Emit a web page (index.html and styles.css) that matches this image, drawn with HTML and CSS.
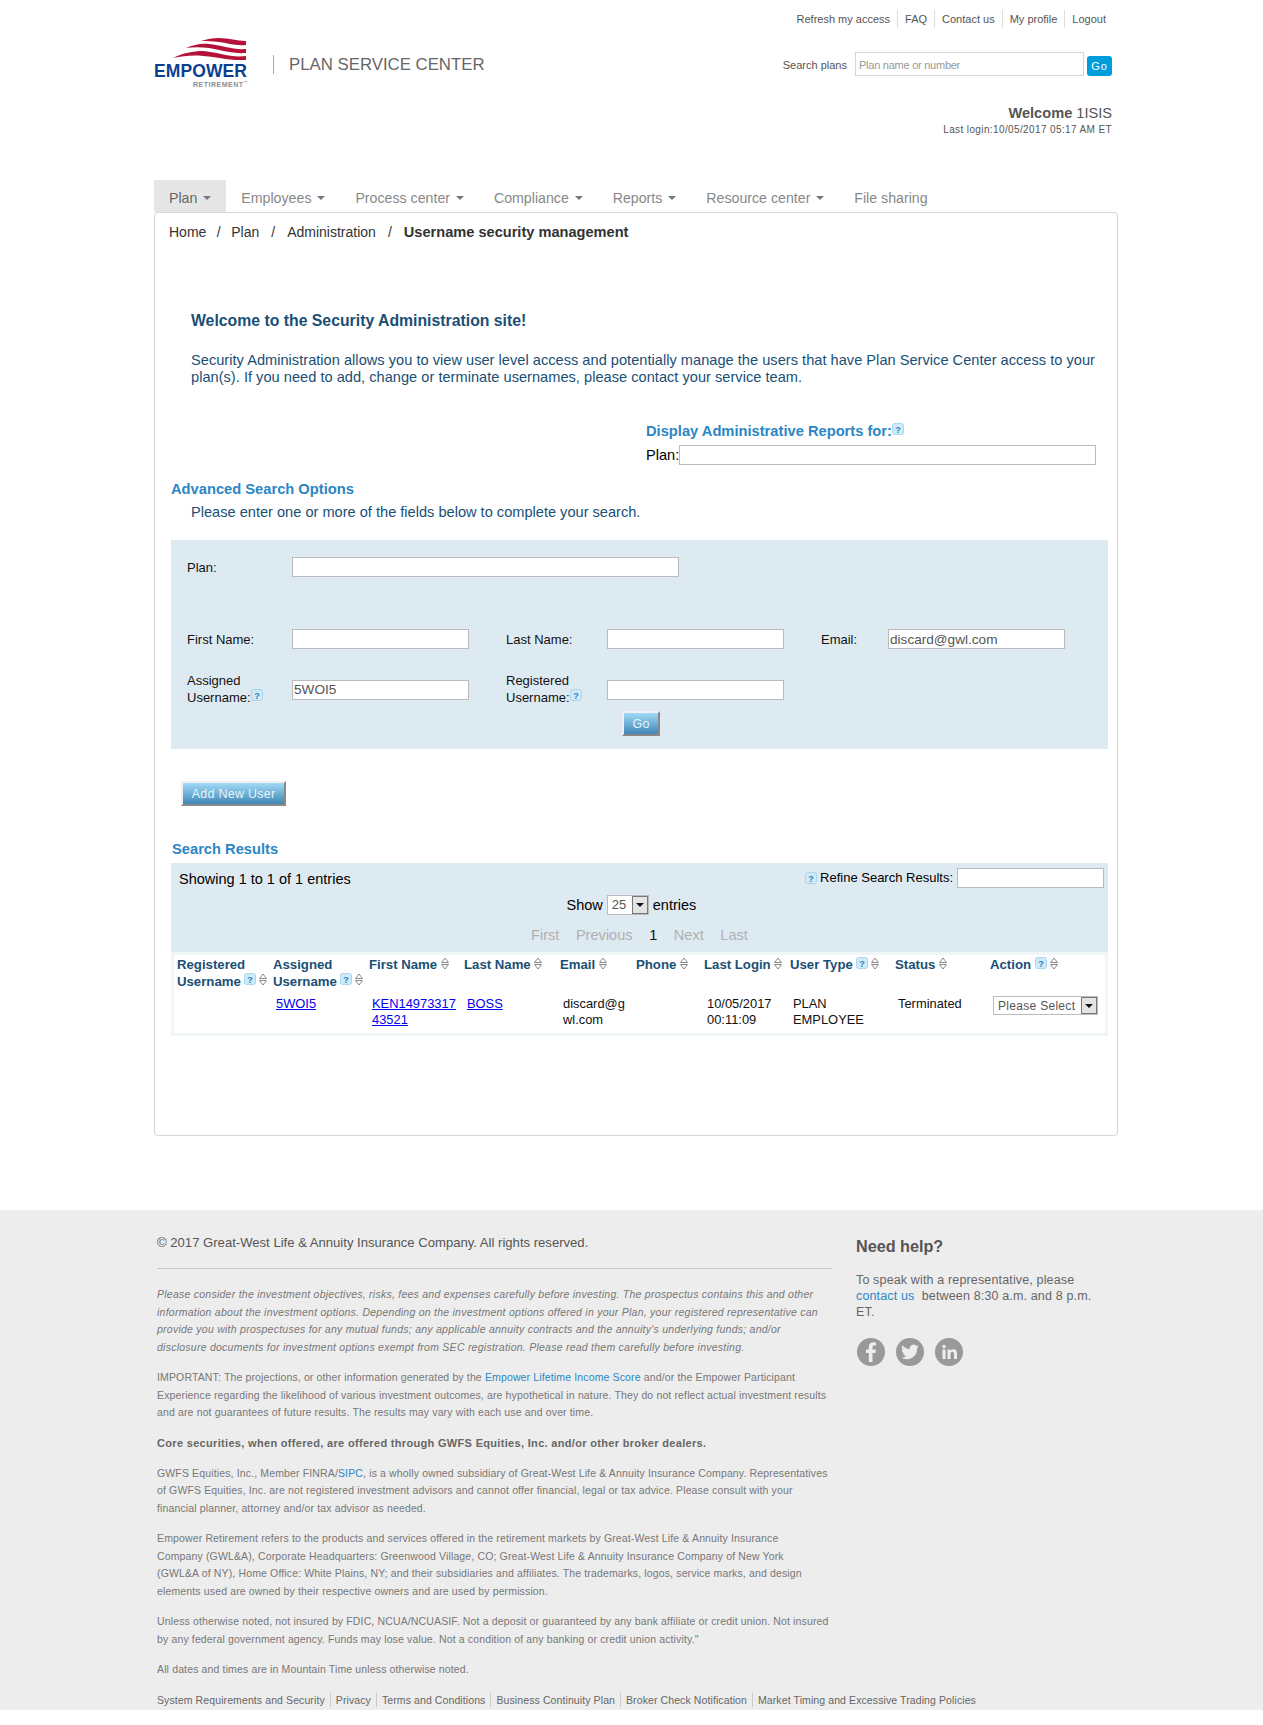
FILE: index.html
```html
<!DOCTYPE html>
<html lang="en">
<head>
<meta charset="utf-8">
<title>Plan Service Center</title>
<link rel="stylesheet" href="styles.css">
</head>
<body>
<div class="page">
  <header class="header">
    <div class="brand">
      <div class="logo">
        <svg class="flag" width="74" height="22" viewBox="0 0 74 22"><path fill="#b5123a" d="M28 3C34 1 40 0 46 0C56 0 64 3 73 3V7C62 8 54 5 46 4C40 3 34 3 28 3ZM13 10C20 7 28 5 36 6C48 7 60 12 73 11V15C60 16 48 12 36 10C28 9 20 9 13 10ZM0 20C10 15 20 13 30 13C44 14 58 20 73 18V22C58 23 44 19 30 18C20 17 10 18 0 20Z"/></svg>
        <div class="logo-word">EMPOWER</div>
        <div class="logo-sub">RETIREMENT<sup>™</sup></div>
      </div>
      <div class="site-title">PLAN SERVICE CENTER</div>
    </div>
    <div class="utility">
      <nav class="top-links">
        <a>Refresh my access</a><a>FAQ</a><a>Contact us</a><a>My profile</a><a>Logout</a>
      </nav>
      <div class="plan-search">
        <span class="plan-search-label">Search plans</span>
        <input class="plan-search-input" placeholder="Plan name or number">
        <button class="go-small">Go</button>
      </div>
      <div class="welcome"><b>Welcome</b> 1ISIS</div>
      <div class="last-login">Last login:10/05/2017 05:17 AM ET</div>
    </div>
  </header>

  <nav class="tabs">
    <a class="tab active">Plan<i class="caret"></i></a>
    <a class="tab">Employees<i class="caret"></i></a>
    <a class="tab">Process center<i class="caret"></i></a>
    <a class="tab">Compliance<i class="caret"></i></a>
    <a class="tab">Reports<i class="caret"></i></a>
    <a class="tab">Resource center<i class="caret"></i></a>
    <a class="tab">File sharing</a>
  </nav>

  <main class="panel">
    <div class="crumbs">
      <a>Home</a><span class="sep">/</span><a>Plan</a><span class="sep">/</span><a>Administration</a><span class="sep">/</span><b>Username security management</b>
    </div>
    <section class="intro">
      <h1>Welcome to the Security Administration site!</h1>
      <p>Security Administration allows you to view user level access and potentially manage the users that have Plan Service Center access to your plan(s). If you need to add, change or terminate usernames, please contact your service team.</p>
    </section>
    <section class="reports">
      <h2>Display Administrative Reports for:<i class="help"><svg viewBox="0 0 12 12"><rect x=".5" y=".5" width="11" height="11" rx="2" fill="#cfe9f6" stroke="#a9d6ec"/><text x="6" y="9.500" text-anchor="middle">?</text></svg></i></h2>
      <label class="reports-plan">Plan:<input class="reports-input"></label>
    </section>
    <h2 class="adv-title">Advanced Search Options</h2>
    <p class="adv-note">Please enter one or more of the fields below to complete your search.</p>
    <form class="search-box">
      <div class="row row-plan">
        <label class="lbl">Plan:</label><input class="field field-wide">
      </div>
      <div class="row row-names">
        <label class="lbl">First Name:</label><input class="field">
        <label class="lbl lbl2">Last Name:</label><input class="field">
        <label class="lbl lbl3">Email:</label><input class="field" value="discard@gwl.com">
      </div>
      <div class="row row-user">
        <label class="lbl">Assigned<br>Username:<i class="help"><svg viewBox="0 0 12 12"><rect x=".5" y=".5" width="11" height="11" rx="2" fill="#cfe9f6" stroke="#a9d6ec"/><text x="6" y="9.500" text-anchor="middle">?</text></svg></i></label><input class="field" value="5WOI5">
        <label class="lbl lbl2">Registered<br>Username:<i class="help"><svg viewBox="0 0 12 12"><rect x=".5" y=".5" width="11" height="11" rx="2" fill="#cfe9f6" stroke="#a9d6ec"/><text x="6" y="9.500" text-anchor="middle">?</text></svg></i></label><input class="field">
      </div>
      <div class="go-row"><button type="button" class="btn btn-go">Go</button></div>
    </form>
    <button class="btn btn-add">Add New User</button>
    <h2 class="results-title">Search Results</h2>
    <section class="results">
      <div class="results-head">
        <div class="showing">Showing 1 to 1 of 1 entries</div>
        <div class="refine"><i class="help"><svg viewBox="0 0 12 12"><rect x=".5" y=".5" width="11" height="11" rx="2" fill="#cfe9f6" stroke="#a9d6ec"/><text x="6" y="9.500" text-anchor="middle">?</text></svg></i> Refine Search Results:<input class="refine-input"></div>
        <div class="length">Show <span class="select select-len">25<i class="arrow"></i></span> entries</div>
        <div class="pager"><span>First</span><span>Previous</span><b>1</b><span>Next</span><span>Last</span></div>
      </div>
      <div class="table-wrap">
      <table class="grid">
        <colgroup><col class="c1"><col class="c2"><col class="c3"><col class="c4"><col class="c5"><col class="c6"><col class="c7"><col class="c8"><col class="c9"><col class="c10"></colgroup>
        <thead>
          <tr>
            <th>Registered<br>Username <i class="help"><svg viewBox="0 0 12 12"><rect x=".5" y=".5" width="11" height="11" rx="2" fill="#cfe9f6" stroke="#a9d6ec"/><text x="6" y="9.500" text-anchor="middle">?</text></svg></i><svg class="sort" viewBox="0 0 8 13"><path d="M4 1 7.500 5.500H.5zM4 12 .5 7.500h7z"/></svg></th>
            <th>Assigned<br>Username <i class="help"><svg viewBox="0 0 12 12"><rect x=".5" y=".5" width="11" height="11" rx="2" fill="#cfe9f6" stroke="#a9d6ec"/><text x="6" y="9.500" text-anchor="middle">?</text></svg></i><svg class="sort" viewBox="0 0 8 13"><path d="M4 1 7.500 5.500H.5zM4 12 .5 7.500h7z"/></svg></th>
            <th>First Name <svg class="sort" viewBox="0 0 8 13"><path d="M4 1 7.500 5.500H.5zM4 12 .5 7.500h7z"/></svg></th>
            <th>Last Name <svg class="sort" viewBox="0 0 8 13"><path d="M4 1 7.500 5.500H.5zM4 12 .5 7.500h7z"/></svg></th>
            <th>Email <svg class="sort" viewBox="0 0 8 13"><path d="M4 1 7.500 5.500H.5zM4 12 .5 7.500h7z"/></svg></th>
            <th>Phone <svg class="sort" viewBox="0 0 8 13"><path d="M4 1 7.500 5.500H.5zM4 12 .5 7.500h7z"/></svg></th>
            <th>Last Login <svg class="sort" viewBox="0 0 8 13"><path d="M4 1 7.500 5.500H.5zM4 12 .5 7.500h7z"/></svg></th>
            <th>User Type <i class="help"><svg viewBox="0 0 12 12"><rect x=".5" y=".5" width="11" height="11" rx="2" fill="#cfe9f6" stroke="#a9d6ec"/><text x="6" y="9.500" text-anchor="middle">?</text></svg></i><svg class="sort" viewBox="0 0 8 13"><path d="M4 1 7.500 5.500H.5zM4 12 .5 7.500h7z"/></svg></th>
            <th>Status <svg class="sort" viewBox="0 0 8 13"><path d="M4 1 7.500 5.500H.5zM4 12 .5 7.500h7z"/></svg></th>
            <th>Action <i class="help"><svg viewBox="0 0 12 12"><rect x=".5" y=".5" width="11" height="11" rx="2" fill="#cfe9f6" stroke="#a9d6ec"/><text x="6" y="9.500" text-anchor="middle">?</text></svg></i><svg class="sort" viewBox="0 0 8 13"><path d="M4 1 7.500 5.500H.5zM4 12 .5 7.500h7z"/></svg></th>
          </tr>
        </thead>
        <tbody>
          <tr>
            <td></td>
            <td><a href="#">5WOI5</a></td>
            <td><a href="#">KEN14973317<br>43521</a></td>
            <td><a href="#">BOSS</a></td>
            <td>discard@g<br>wl.com</td>
            <td></td>
            <td>10/05/2017<br>00:11:09</td>
            <td>PLAN<br>EMPLOYEE</td>
            <td>Terminated</td>
            <td><span class="select select-action">Please Select<i class="arrow"></i></span></td>
          </tr>
        </tbody>
      </table>
      </div>
    </section>
  </main>

  <footer class="footer">
    <div class="footer-inner">
      <div class="legal">
        <p class="copyright">© 2017 Great-West Life &amp; Annuity Insurance Company. All rights reserved.</p>
        <p class="em">Please consider the investment objectives, risks, fees and expenses carefully before investing. The prospectus contains this and other<br>information about the investment options. Depending on the investment options offered in your Plan, your registered representative can<br>provide you with prospectuses for any mutual funds; any applicable annuity contracts and the annuity's underlying funds; and/or<br>disclosure documents for investment options exempt from SEC registration. Please read them carefully before investing.</p>
        <p>IMPORTANT: The projections, or other information generated by the <a class="link">Empower Lifetime Income Score</a> and/or the Empower Participant<br>Experience regarding the likelihood of various investment outcomes, are hypothetical in nature. They do not reflect actual investment results<br>and are not guarantees of future results. The results may vary with each use and over time.</p>
        <p class="strong">Core securities, when offered, are offered through GWFS Equities, Inc. and/or other broker dealers.</p>
        <p>GWFS Equities, Inc., Member FINRA/<a class="link">SIPC</a>, is a wholly owned subsidiary of Great-West Life &amp; Annuity Insurance Company. Representatives<br>of GWFS Equities, Inc. are not registered investment advisors and cannot offer financial, legal or tax advice. Please consult with your<br>financial planner, attorney and/or tax advisor as needed.</p>
        <p>Empower Retirement refers to the products and services offered in the retirement markets by Great-West Life &amp; Annuity Insurance<br>Company (GWL&amp;A), Corporate Headquarters: Greenwood Village, CO; Great-West Life &amp; Annuity Insurance Company of New York<br>(GWL&amp;A of NY), Home Office: White Plains, NY; and their subsidiaries and affiliates. The trademarks, logos, service marks, and design<br>elements used are owned by their respective owners and are used by permission.</p>
        <p>Unless otherwise noted, not insured by FDIC, NCUA/NCUASIF. Not a deposit or guaranteed by any bank affiliate or credit union. Not insured<br>by any federal government agency. Funds may lose value. Not a condition of any banking or credit union activity."</p>
        <p>All dates and times are in Mountain Time unless otherwise noted.</p>
      </div>
      <aside class="help-box">
        <h3>Need help?</h3>
        <p>To speak with a representative, please <a class="link">contact us</a>&nbsp; between 8:30 a.m. and 8 p.m. ET.</p>
        <div class="social">
          <svg viewBox="0 0 28 28"><circle cx="14" cy="14" r="14" fill="#999"/><path fill="#ededed" d="M15.500 24v-9h3l.5-3.500h-3.500V9.300c0-1 .3-1.700 1.800-1.700H19V4.500c-.4 0-1.500-.2-2.700-.2-2.700 0-4.500 1.600-4.500 4.600v2.600H9V15h2.800v9z"/></svg>
          <svg viewBox="0 0 28 28"><circle cx="14" cy="14" r="14" fill="#999"/><path fill="#ededed" d="M23 8.300c-.7.300-1.400.5-2.100.6.800-.5 1.300-1.200 1.600-2-.7.400-1.500.7-2.300.9a3.700 3.700 0 0 0-6.300 3.400C10.800 11 8.100 9.500 6.300 7.300c-1 1.700-.5 3.900 1.100 4.900-.6 0-1.200-.2-1.700-.5 0 1.800 1.300 3.300 3 3.700-.5.100-1.100.2-1.700.1.500 1.500 1.800 2.500 3.500 2.600a7.400 7.400 0 0 1-5.500 1.500A10.500 10.500 0 0 0 21.100 10c.7-.4 1.400-1 1.900-1.700z"/></svg>
          <svg viewBox="0 0 28 28"><circle cx="14" cy="14" r="14" fill="#999"/><path fill="#ededed" d="M7.500 11.500h3V21h-3zM9 6.800a1.800 1.800 0 1 1 0 3.600 1.800 1.800 0 0 1 0-3.600zM12.500 11.500h2.900v1.300c.5-.8 1.500-1.600 3-1.600 3 0 3.600 2 3.600 4.500V21h-3v-4.700c0-1.200 0-2.600-1.600-2.600s-1.900 1.200-1.900 2.500V21h-3z"/></svg>
        </div>
      </aside>
    </div>
    <nav class="foot-links">
      <a>System Requirements and Security</a><a>Privacy</a><a>Terms and Conditions</a><a>Business Continuity Plan</a><a>Broker Check Notification</a><a>Market Timing and Excessive Trading Policies</a>
    </nav>
  </footer>
</div>
</body>
</html>
```

FILE: styles.css
```css
* { box-sizing: border-box; }
html, body { margin: 0; padding: 0; }
body { background: #fff; font-family: "Liberation Sans", Arial, sans-serif; font-size: 14px; color: #000; }
.page { width: 1263px; height: 1725px; overflow: hidden; }

.header { width: 958px; margin-left: 154px; height: 180px; display: flex; justify-content: space-between; }
.brand { display: flex; align-items: flex-start; padding-top: 38px; }
.logo { width: 119px; }
.flag { display: block; margin-left: 19px; }
.logo-word { margin-top: 5px; height: 13px; line-height: 13px; font-size: 17.500px; font-weight: 700; color: #0b3f8e; letter-spacing: .1px; white-space: nowrap; }
.logo-sub { margin: 4px 0 0 39px; height: 6px; line-height: 6px; font-size: 7px; font-weight: 700; color: #8a8d92; letter-spacing: .5px; white-space: nowrap; }
.logo-sub sup { font-size: 4px; line-height: 0; }
.site-title { margin-top: 17px; border-left: 1px solid #aaa; padding-left: 15px; height: 19px; line-height: 19px; font-size: 16.800px; color: #666; white-space: nowrap; }
.utility { display: flex; flex-direction: column; align-items: flex-end; padding-top: 10px; color: #555; }
.top-links { display: flex; height: 18px; font-size: 11px; line-height: 18px; }
.top-links a { padding: 0 7px; border-left: 1px solid #ddd; color: #555; }
.top-links a:first-child { border-left: 0; }
.top-links a:last-child { padding-right: 6px; }
.plan-search { display: flex; align-items: center; margin-top: 24px; font-size: 11px; gap: 8px; }
.plan-search-label { padding-top: 2px; }
.plan-search-input { width: 229px; height: 24px; border: 1px solid #d8d6ce; padding: 2px 3px 0; font: 11px "Liberation Sans", sans-serif; letter-spacing: -.25px; background: #fff; }
.plan-search-input::placeholder { color: #999; }
.go-small { width: 25px; height: 20px; margin-left: -5px; margin-top: 4px; border: 0; border-radius: 3px; background: #009cdc; color: #fff; font: 400 11px "Liberation Sans", sans-serif; letter-spacing: 1px; padding: 0; }
.welcome { margin-top: 29px; font-size: 14.600px; line-height: 17px; color: #555; }
.last-login { margin-top: 2px; font-size: 10px; letter-spacing: .38px; color: #555; }

.tabs { display: flex; margin-left: 154px; height: 32px; }
.tab { display: block; padding: 9px 15px 0; font-size: 14.200px; line-height: 18px; color: #888; }
.tab.active { background: #e6e6e6; color: #666; }
.caret { display: inline-block; width: 0; height: 0; margin-left: 5.900px; vertical-align: 3px; border: 4px solid transparent; border-top-color: #777; border-bottom: 0; }

.panel { width: 964px; height: 924px; margin-left: 154px; border: 1px solid #d8d6ce; border-radius: 4px; padding: 0; }
.crumbs { padding: 10px 0 0 14px; font-size: 14px; line-height: 18px; color: #333; height: 99px; }
.crumbs .sep { margin: 0 12px; }
.crumbs .sep:first-of-type { margin: 0 10.500px; }
.crumbs b { color: #333; font-size: 14.600px; }
.intro { padding: 0 20px 0 36px; color: #1a4f75; }
.intro h1 { margin: 0 0 22px; font-size: 15.800px; line-height: 18px; font-weight: 700; color: #1a4f75; }
.intro p { margin: 0; font-size: 14.600px; line-height: 17px; letter-spacing: .02px; }
.reports { margin: 36px 0 0 491px; }
.reports h2 { margin: 0; font-size: 14.700px; line-height: 18px; color: #2b86c5; }
.reports-plan { display: flex; align-items: center; margin-top: 5px; font-size: 14.600px; }
.reports-input { width: 417px; height: 20px; border: 1px solid #bbb; padding: 0; background: #fff; }
.adv-title, .results-title { margin: 0 0 0 16px; font-size: 14.700px; line-height: 18px; color: #2b86c5; }
.adv-title { margin-top: 15px; }
.adv-note { margin: 6px 0 0 36px; font-size: 14.600px; line-height: 17px; color: #1a4f75; }
.search-box { margin: 19px 0 0 16px; width: 937px; height: 209px; background: #deeaf2; padding-top: 17px; font-size: 13px; position: relative; }
.row { display: flex; align-items: center; padding-left: 16px; }
.lbl { width: 105px; line-height: 16px; color: #111; }
.row-plan .lbl, .row-names .lbl { padding-top: 2px; }
.lbl2 { width: 101px; margin-left: 37px; }
.lbl3 { width: 67px; margin-left: 37px; }
.field { width: 177px; height: 20px; border: 1px solid #bbb; background: #fff; padding: 0 1px; font: 13.600px "Liberation Sans", sans-serif; color: #555; }
.field-wide { width: 387px; }
.row-names { margin-top: 52px; }
.row-user { margin-top: 24px; }
.go-row { position: absolute; left: 451px; top: 171px; }
.btn { border: 2px solid; border-color: #f0f0f0 #888 #888 #f0f0f0; background: linear-gradient(#a2daf7, #3f87b5); color: #e6f4fb; font: 12.500px "Liberation Sans", sans-serif; letter-spacing: .25px; padding: 0; }
.btn-go { display: block; width: 38px; height: 25px; }
.btn-add { display: block; width: 105px; height: 25px; margin: 32px 0 0 26px; }
.results-title { margin-top: 34px; margin-left: 17px; }
.results { margin: 5px 0 0 16px; width: 937px; background: linear-gradient(#deeaf2 89px, #f0f5f8 89px); padding-bottom: 3px; }
.results-head { position: relative; height: 89px; font-size: 14.500px; }
.showing { position: absolute; left: 8px; top: 8px; line-height: 17px; }
.refine { position: absolute; right: 4px; top: 4px; display: flex; align-items: center; gap: 3px; font-size: 13px; line-height: 22px; }
.refine-input { width: 147px; height: 20px; border: 1px solid #bbb; background: #fff; margin-left: 1px; }
.length { position: absolute; left: 395.500px; top: 32px; display: flex; align-items: center; gap: 4px; line-height: 20px; }
.select { display: inline-flex; align-items: center; justify-content: space-between; background: #fff; border: 1px solid #bbb; color: #555; }
.select-len { width: 42px; height: 20px; padding-left: 4px; font-size: 13px; }
.arrow { display: block; flex: none; width: 16px; height: 18px; background: #e4e4e4; border: 1px solid #777; position: relative; }
.arrow::after { content: ""; position: absolute; left: 3px; top: 6px; border: 4px solid transparent; border-top-color: #111; border-bottom: 0; }
.pager { position: absolute; left: 360px; top: 64px; display: flex; gap: 16.500px; line-height: 17px; font-size: 14.600px; color: #b0b0b0; }
.pager b { font-weight: 400; color: #111; }
.table-wrap { margin: 3px 0 0 3px; background: #fff; width: 931px; }
.grid { width: 931px; table-layout: fixed; border-collapse: collapse; }
.c1 { width: 96px; } .c2 { width: 96px; } .c3 { width: 95px; } .c4 { width: 96px; } .c5 { width: 76px; } .c6 { width: 68px; } .c7 { width: 86px; } .c8 { width: 105px; } .c9 { width: 95px; } .c10 { width: 118px; }
.grid th { text-align: left; vertical-align: top; font-size: 13.200px; line-height: 17px; color: #1a4f75; padding: 1px 0 0 3px; height: 41px; font-weight: 700; white-space: nowrap; }
.grid td { vertical-align: top; line-height: 16px; padding: 0 0 5px 6px; font-size: 12.900px; color: #111; }
.grid td a { color: #00e; text-decoration: underline; }
.select-action { width: 105px; height: 19px; padding-left: 4px; font-size: 12px; letter-spacing: .3px; }
.select-action .arrow { height: 17px; }

.help { display: inline-block; width: 12px; height: 12px; vertical-align: 1px; }
.help svg { display: block; width: 12px; height: 12px; }
.help text { font: 700 9px "Liberation Sans", sans-serif; fill: #2a85c0; }
.sort { display: inline-block; width: 8px; height: 13px; vertical-align: 0; overflow: visible; }
.sort path { fill: none; stroke: #888; stroke-width: 1; }
.help + .sort { margin-left: 3px; }
.grid th:nth-child(n+3) .sort { vertical-align: -1px; }
.grid th:nth-child(n+3) .help { vertical-align: 0; }

.footer { margin-top: 74px; height: 500px; background: #ededed; padding-left: 157px; color: #777; font-size: 10.500px; }
.footer-inner { display: flex; height: 483px; }
.legal { width: 675px; padding-top: 24px; flex: none; }
.legal p { margin: 0 0 12.700px; line-height: 17.600px; letter-spacing: .14px; white-space: nowrap; }
.legal .copyright { font-size: 13.100px; line-height: 17px; color: #555; margin: 0 0 17px; padding-bottom: 17px; border-bottom: 1px solid #c8c8c8; letter-spacing: 0; }
.legal .em { font-style: italic; letter-spacing: .25px; }
.legal .strong { font-weight: 700; color: #666; font-size: 11px; letter-spacing: .32px; }
.link { color: #2b86c5; }
.help-box { width: 245px; margin-left: 24px; padding-top: 26px; color: #666; }
.help-box h3 { margin: 0 0 16px; font-size: 16.200px; line-height: 20px; color: #555; }
.help-box p { margin: 0 0 18px; font-size: 12.500px; line-height: 16px; letter-spacing: .15px; }
.social { display: flex; gap: 11px; margin-left: 1px; }
.social svg { width: 28px; height: 28px; }
.foot-links { display: flex; font-size: 10.500px; height: 14px; line-height: 14px; letter-spacing: .1px; }
.foot-links a { padding: 0 5px; border-left: 1px solid #ccc; color: #666; }
.foot-links a:first-child { border-left: 0; padding-left: 0; }
```
